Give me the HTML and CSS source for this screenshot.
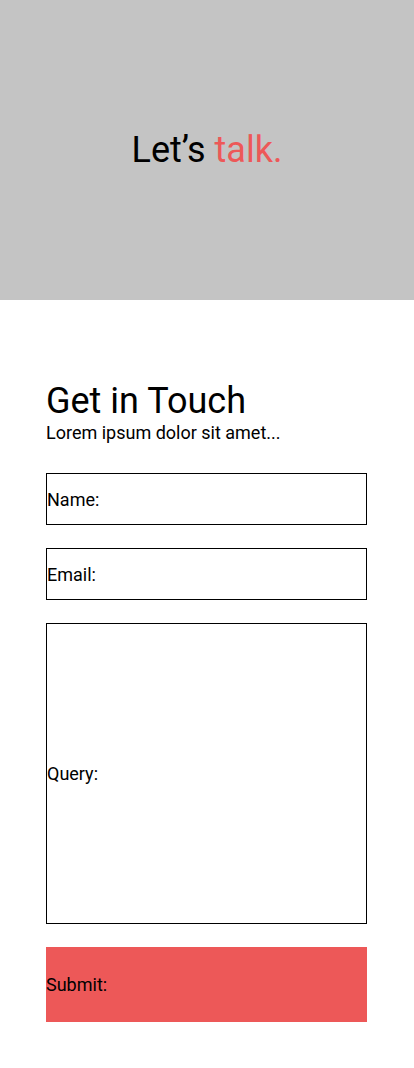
FILE: index.html
```html
<!DOCTYPE html>
<html>
<head>
<meta charset="utf-8">
<link rel="stylesheet" href="styles.css">
</head>
<body>
<header class="hero">
  <h1 class="hero-title">Let’s <span class="accent">talk.</span></h1>
</header>
<main class="contact">
  <h2 class="contact-title">Get in Touch</h2>
  <p class="contact-sub">Lorem ipsum dolor sit amet...</p>
  <form class="form">
    <div class="field field-short">Name:</div>
    <div class="field field-short">Email:</div>
    <div class="field field-tall">Query:</div>
    <div class="submit">Submit:</div>
  </form>
</main>
</body>
</html>
```
FILE: styles.css
```css
* { box-sizing: border-box; }
html, body { margin: 0; padding: 0; }
body {
  font-family: Roboto, "Liberation Sans", sans-serif;
  color: #000;
  background: #fff;
}
.hero {
  height: 300px;
  background: #c4c4c4;
  display: flex;
  align-items: center;
  justify-content: center;
}
.hero-title {
  margin: 0;
  font-size: 36px;
  font-weight: 400;
  line-height: 1;
}
.accent { color: #ed5858; }
.contact {
  padding: 80px 47px 46px 46px;
}
.contact-title {
  margin: 0;
  font-size: 36px;
  font-weight: 400;
  line-height: 42px;
}
.contact-sub {
  margin: 0;
  font-size: 18px;
  line-height: 21px;
}
.form {
  margin-top: 30px;
  display: flex;
  flex-direction: column;
  gap: 23px;
}
.field {
  border: 1px solid #000;
  display: flex;
  align-items: center;
  font-size: 18px;
}
.field-short { height: 52px; }
.field-tall { height: 301px; }
.submit {
  height: 75px;
  background: #ed5858;
  display: flex;
  align-items: center;
  font-size: 18px;
}
```
